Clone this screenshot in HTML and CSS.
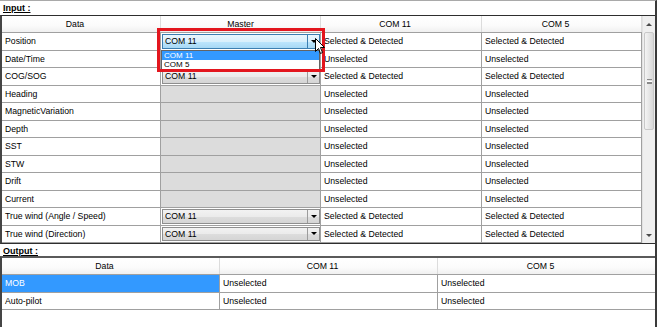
FILE: index.html
```html
<!DOCTYPE html>
<html lang="en">
  <head>
    <meta charset="UTF-8" />
    <title>Input / Output</title>
    <link rel="stylesheet" href="styles.css">
  </head>
  <body>
    <div class="window">
      <div class="caption">Input :</div>
      <div class="grid grid-in">
        <div class="grid-body">
          <div class="row head">
            <div class="cell hc">Data</div>
            <div class="cell hc master-h">Master</div>
            <div class="cell hc">COM 11</div>
            <div class="cell hc">COM 5</div>
          </div>
          <div class="row">
            <div class="cell">Position</div>
            <div class="cell mcell open-cell">
              <div class="combo combo-hot"><span>COM 11</span><i class="arrow"></i></div>
              <div class="droplist">
                <div class="item sel">COM 11</div>
                <div class="item">COM 5</div>
              </div>
              <div class="redframe"></div>
              <svg class="cursor" width="10" height="17" viewBox="0 0 10 17">
                <path d="M0.5 0.5 L0.5 13.5 L3.5 10.5 L5.5 15.5 L7.5 14.5 L5.5 9.5 L9.5 9.5 Z" fill="#fff" stroke="#000" stroke-width="1" />
              </svg>
            </div>
            <div class="cell">Selected &amp; Detected</div>
            <div class="cell">Selected &amp; Detected</div>
          </div>
          <div class="row">
            <div class="cell">Date/Time</div>
            <div class="cell mcell"></div>
            <div class="cell">Unselected</div>
            <div class="cell">Unselected</div>
          </div>
          <div class="row">
            <div class="cell">COG/SOG</div>
            <div class="cell mcell"><div class="combo"><span>COM 11</span><i class="arrow"></i></div></div>
            <div class="cell">Selected &amp; Detected</div>
            <div class="cell">Selected &amp; Detected</div>
          </div>
          <div class="row">
            <div class="cell">Heading</div>
            <div class="cell mcell off"></div>
            <div class="cell">Unselected</div>
            <div class="cell">Unselected</div>
          </div>
          <div class="row">
            <div class="cell">MagneticVariation</div>
            <div class="cell mcell off"></div>
            <div class="cell">Unselected</div>
            <div class="cell">Unselected</div>
          </div>
          <div class="row">
            <div class="cell">Depth</div>
            <div class="cell mcell off"></div>
            <div class="cell">Unselected</div>
            <div class="cell">Unselected</div>
          </div>
          <div class="row">
            <div class="cell">SST</div>
            <div class="cell mcell off"></div>
            <div class="cell">Unselected</div>
            <div class="cell">Unselected</div>
          </div>
          <div class="row">
            <div class="cell">STW</div>
            <div class="cell mcell off"></div>
            <div class="cell">Unselected</div>
            <div class="cell">Unselected</div>
          </div>
          <div class="row">
            <div class="cell">Drift</div>
            <div class="cell mcell off"></div>
            <div class="cell">Unselected</div>
            <div class="cell">Unselected</div>
          </div>
          <div class="row">
            <div class="cell">Current</div>
            <div class="cell mcell off"></div>
            <div class="cell">Unselected</div>
            <div class="cell">Unselected</div>
          </div>
          <div class="row">
            <div class="cell">True wind (Angle / Speed)</div>
            <div class="cell mcell"><div class="combo"><span>COM 11</span><i class="arrow"></i></div></div>
            <div class="cell">Selected &amp; Detected</div>
            <div class="cell">Selected &amp; Detected</div>
          </div>
          <div class="row">
            <div class="cell">True wind (Direction)</div>
            <div class="cell mcell"><div class="combo"><span>COM 11</span><i class="arrow"></i></div></div>
            <div class="cell">Selected &amp; Detected</div>
            <div class="cell">Selected &amp; Detected</div>
          </div>
        </div>
        <div class="scrollbar">
          <div class="sb-btn"><i class="tri-up"></i></div>
          <div class="sb-thumb"><i class="grip"></i></div>
          <div class="sb-track"></div>
          <div class="sb-btn"><i class="tri-down"></i></div>
        </div>
      </div>

      <div class="caption caption-out">Output :</div>
      <div class="grid grid-out">
        <div class="row head">
          <div class="cell hc">Data</div>
          <div class="cell hc">COM 11</div>
          <div class="cell hc">COM 5</div>
        </div>
        <div class="row">
          <div class="cell selcell">MOB</div>
          <div class="cell">Unselected</div>
          <div class="cell">Unselected</div>
        </div>
        <div class="row">
          <div class="cell">Auto-pilot</div>
          <div class="cell">Unselected</div>
          <div class="cell">Unselected</div>
        </div>
      </div>
    </div>
  </body>
</html>
```

FILE: styles.css
```css
* {
  margin: 0;
  padding: 0;
  box-sizing: border-box;
}
body {
  width: 657px;
  height: 327px;
  background: #fff;
  font-family: "Liberation Sans", Arial, sans-serif;
  font-size: 8.7px;
  color: #000;
  overflow: hidden;
}
.window {
  width: 657px;
  height: 327px;
  display: flex;
  flex-direction: column;
  border-top: 1px solid #a9a9a9;
  border-right: 2px solid #3a3a3a;
}

/* captions */
.caption {
  height: 14px;
  padding: 2px 0 0 3px;
  font-size: 9px;
  font-weight: bold;
  text-decoration: underline;
  line-height: 11px;
}
.caption-out {
  height: 12px;
  padding-top: 2px;
}

/* grids */
.grid {
  border-left: 2px solid #454545;
}
.grid-in {
  display: flex;
  height: 229px;
  border-top: 1px solid #2e2e2e;
  border-bottom: 1px solid #2e2e2e;
}
.grid-body {
  width: 640px;
}
.grid-out {
  flex: 1;
  border-top: 2px solid #5a5a5a;
}
.row {
  display: grid;
  grid-template-columns: 159px 160px 161px 160px;
  height: 17.5px;
  border-bottom: 1px solid #a0a0a0;
}
.grid-out .row {
  grid-template-columns: 218px 218px 1fr;
}
.row.head {
  height: 17px;
  background: linear-gradient(#ffffff, #fbfbfb 60%, #f0f0f0);
  border-bottom: 1px solid #a0a0a0;
}
.cell {
  display: flex;
  align-items: center;
  padding-left: 3px;
  border-right: 1px solid #a0a0a0;
  white-space: nowrap;
  position: relative;
}
.grid-out .row .cell:last-child {
  border-right: none;
}
.hc {
  justify-content: center;
  padding: 0 12px 0 0;
  border-right-color: #dcdcdc;
}
.master-h {
  padding: 0;
}
.mcell {
  padding: 1px 0 1px 1px;
}
.off {
  background: #dcdcdc;
}
.selcell {
  background: #3399ff;
  color: #fff;
}

/* combo boxes */
.combo {
  flex: 1;
  height: 100%;
  display: flex;
  align-items: center;
  padding-left: 2px;
  border: 1px solid #8e8e8e;
  background: linear-gradient(#f2f2f2, #ebebeb 50%, #dddddd 51%, #d5d5d5);
}
.combo span {
  flex: 1;
}
.combo .arrow {
  width: 12px;
  height: 100%;
  border-left: 1px solid #9c9c9c;
  display: flex;
  align-items: center;
  justify-content: center;
}
.combo .arrow::after {
  content: "";
  border-left: 3px solid transparent;
  border-right: 3px solid transparent;
  border-top: 3px solid #000;
}
.combo-hot {
  border-color: #3c7fb1;
  background: linear-gradient(#eaf6fd, #d9f0fc 50%, #bee6fd 51%, #a7d9f5);
}
.combo-hot .arrow {
  border-left-color: #3c7fb1;
}

/* open dropdown */
.open-cell {
  z-index: 2;
}
.droplist {
  position: absolute;
  left: 0;
  top: 17px;
  width: 159px;
  height: 20px;
  background: #fff;
  border: 1px solid #646464;
  z-index: 3;
}
.item {
  height: 9px;
  line-height: 9px;
  font-size: 8px;
  padding-left: 2px;
  overflow: hidden;
}
.item.sel {
  background: #3399ff;
  color: #fff;
}
.redframe {
  position: absolute;
  left: -4px;
  top: -5px;
  width: 168px;
  height: 44px;
  border: 3px solid #e3161e;
  z-index: 4;
}
.cursor {
  position: absolute;
  left: 154px;
  top: 5px;
  z-index: 5;
}

/* scrollbar */
.scrollbar {
  width: 13px;
  display: flex;
  flex-direction: column;
  background: #efefef;
  border-left: 1px solid #e2e2e2;
}
.sb-btn {
  height: 16px;
  display: flex;
  align-items: center;
  justify-content: center;
}
.tri-up {
  border-left: 3px solid transparent;
  border-right: 3px solid transparent;
  border-bottom: 3px solid #4a4a4a;
}
.tri-down {
  border-left: 3px solid transparent;
  border-right: 3px solid transparent;
  border-top: 3px solid #4a4a4a;
}
.sb-thumb {
  height: 98px;
  margin: 0 1px;
  border: 1px solid #c8c8c8;
  border-radius: 2px;
  background: linear-gradient(90deg, #f4f4f4, #e6e6e6 50%, #d8d8d8);
  display: flex;
  align-items: center;
  justify-content: center;
}
.grip {
  width: 5px;
  height: 5px;
  border-top: 1px solid #8a8a8a;
  border-bottom: 1px solid #8a8a8a;
  background: linear-gradient(#fff 1px, #8a8a8a 1px, #8a8a8a 2px, transparent 2px);
  background-position: 0 1px;
  background-repeat: no-repeat;
}
.sb-track {
  flex: 1;
}
```
